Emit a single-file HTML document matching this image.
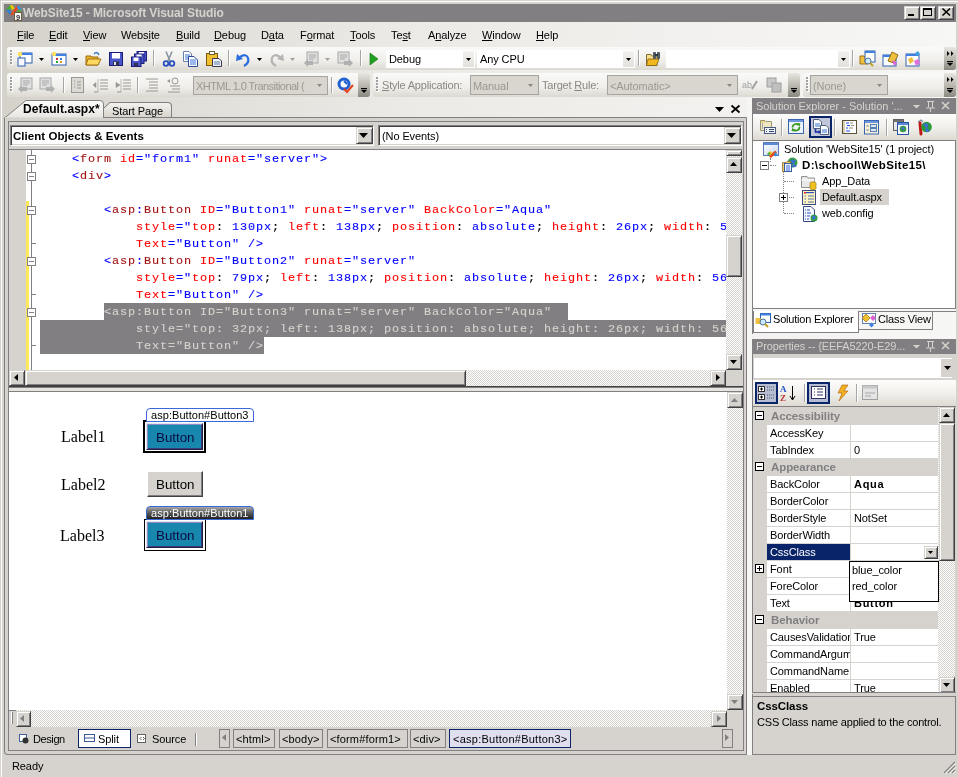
<!DOCTYPE html><html><head><meta charset="utf-8"><style>
*{box-sizing:border-box;margin:0;padding:0}
html,body{width:958px;height:777px;overflow:hidden}
body{position:relative;background:#d6d3ce;font-family:"Liberation Sans",sans-serif;font-size:11px;color:#000}
.a{position:absolute}
.t{position:absolute;white-space:pre}
.hatch{background-color:#eae8e3;background-image:repeating-conic-gradient(#d6d3ce 0 25%,#fff 0 50%);background-size:2px 2px}
.b3{position:absolute;background:#d6d3ce;border:1px solid;border-color:#d6d3ce #404040 #404040 #d6d3ce;box-shadow:inset 1px 1px #fff,inset -1px -1px #827f82}
.code{position:absolute;white-space:pre;font-family:"Liberation Mono",monospace;font-size:11.8px;letter-spacing:0.92px;line-height:17px;-webkit-text-stroke:0.12px}
.tg{color:#0000ff}.tn{color:#a31515}.an{color:#ff0000}.av{color:#0000ff}.pk{color:#000}
.tb{position:absolute;border-radius:3px;background:linear-gradient(#fafaf9,#efeeea 60%,#dcd9d1)}
svg{position:absolute;overflow:visible}
</style></head><body><div style="position:absolute;left:0;top:0;width:958px;height:777px;will-change:transform">
<div class="a " style="left:1px;top:1px;width:957px;height:1px;background:#fff"></div>
<div class="a " style="left:1px;top:1px;width:1px;height:776px;background:#fff"></div>
<div class="a " style="left:4px;top:22px;width:952px;height:733px;background:linear-gradient(90deg,#d5d2ca 0%,#e0ded8 18%,#eceae6 42%,#f3f2f0 79%,#f7f7f5 100%)"></div>
<div class="a " style="left:4px;top:4px;width:952px;height:18px;background:#827f82"></div>
<svg style="left:0;top:0" width="25" height="25" viewBox="0 0 25 25"><path d="M5.8 9.8 L10 5 L12.5 7.5 L10 9.8Z" fill="#4cae2c"/><path d="M10 5 L13 5.5 L14.5 8.5 L12 10 Z" fill="#f6c800"/><path d="M5.8 9.8 L10 9.8 L11 14.5 L10 14.8Z" fill="#2a7ee0"/><path d="M10.2 14.8 L17.6 5 L20 6.5 L12.5 15.5Z" fill="#e8461c"/><path d="M18 5 L22 9.5 L19.5 10 L17 7.5Z" fill="#2a9ae8"/><path d="M22 9.5 L19 13 L16 12.5 L18.5 10Z" fill="#4cae2c"/><path d="M13 12.5 L16 12 L14.5 14Z" fill="#f6c000"/><rect x="14.5" y="12.5" width="7" height="8" fill="#fff" stroke="#6a5a40"/><text x="18" y="19.6" font-size="7.5" font-weight="bold" text-anchor="middle" fill="#303030" font-family="Liberation Sans">9</text></svg>
<div class="t" style="left:23px;top:6px;font-size:12px;line-height:14px;font-weight:bold;color:#d6d3ce;letter-spacing:-0.1px">WebSite15 - Microsoft Visual Studio</div>
<div class="b3" style="left:904px;top:6px;width:16px;height:14px"></div>
<div class="b3" style="left:920px;top:6px;width:16px;height:14px"></div>
<div class="b3" style="left:938px;top:6px;width:16px;height:14px"></div>
<div class="a " style="left:908px;top:14px;width:6px;height:2px;background:#000"></div>
<div class="a " style="left:923px;top:8px;width:9px;height:8px;border:1px solid #000;border-top-width:2px"></div>
<svg style="left:942px;top:8px" width="9" height="8"><path d="M0.5 0.5 L8 7.5 M8 0.5 L0.5 7.5" stroke="#000" stroke-width="1.6"/></svg>
<div class="t" style="left:17px;top:29px;font-size:11px;line-height:13px;letter-spacing:-0.1px"><u>F</u>ile</div>
<div class="t" style="left:49px;top:29px;font-size:11px;line-height:13px;letter-spacing:-0.1px"><u>E</u>dit</div>
<div class="t" style="left:83px;top:29px;font-size:11px;line-height:13px;letter-spacing:-0.1px"><u>V</u>iew</div>
<div class="t" style="left:121px;top:29px;font-size:11px;line-height:13px;letter-spacing:-0.1px">Webs<u>i</u>te</div>
<div class="t" style="left:176px;top:29px;font-size:11px;line-height:13px;letter-spacing:-0.1px"><u>B</u>uild</div>
<div class="t" style="left:214px;top:29px;font-size:11px;line-height:13px;letter-spacing:-0.1px"><u>D</u>ebug</div>
<div class="t" style="left:261px;top:29px;font-size:11px;line-height:13px;letter-spacing:-0.1px">D<u>a</u>ta</div>
<div class="t" style="left:300px;top:29px;font-size:11px;line-height:13px;letter-spacing:-0.1px">F<u>o</u>rmat</div>
<div class="t" style="left:350px;top:29px;font-size:11px;line-height:13px;letter-spacing:-0.1px"><u>T</u>ools</div>
<div class="t" style="left:391px;top:29px;font-size:11px;line-height:13px;letter-spacing:-0.1px">Te<u>s</u>t</div>
<div class="t" style="left:428px;top:29px;font-size:11px;line-height:13px;letter-spacing:-0.1px">A<u>n</u>alyze</div>
<div class="t" style="left:482px;top:29px;font-size:11px;line-height:13px;letter-spacing:-0.1px"><u>W</u>indow</div>
<div class="t" style="left:536px;top:29px;font-size:11px;line-height:13px;letter-spacing:-0.1px"><u>H</u>elp</div>
<div class="tb" style="left:7px;top:47px;width:949px;height:23px"></div>
<div class="a " style="left:10px;top:50px;width:2px;height:2px;background:#a0a0a0;box-shadow:1px 1px #fff"></div>
<div class="a " style="left:10px;top:53px;width:2px;height:2px;background:#a0a0a0;box-shadow:1px 1px #fff"></div>
<div class="a " style="left:10px;top:56px;width:2px;height:2px;background:#a0a0a0;box-shadow:1px 1px #fff"></div>
<div class="a " style="left:10px;top:59px;width:2px;height:2px;background:#a0a0a0;box-shadow:1px 1px #fff"></div>
<div class="a " style="left:10px;top:62px;width:2px;height:2px;background:#a0a0a0;box-shadow:1px 1px #fff"></div>
<svg style="left:17px;top:51px" width="16" height="16" viewBox="0 0 16 16"><rect x="3" y="2" width="12" height="10" fill="#fff" stroke="#3060b0"/><rect x="3" y="2" width="12" height="2" fill="#4080e0"/><rect x="1" y="7" width="7" height="8" fill="#f8f8ff" stroke="#3060b0"/><circle cx="3" cy="3" r="2.2" fill="#ffe060"/></svg>
<svg style="left:39px;top:58px" width="5" height="3"><path d="M0 0H5L2.5 3Z" fill="#000"/></svg>
<svg style="left:51px;top:51px" width="16" height="16" viewBox="0 0 16 16"><rect x="1" y="3" width="14" height="11" fill="#fff" stroke="#3060b0"/><rect x="1" y="3" width="14" height="2" fill="#4080e0"/><rect x="5" y="7" width="2" height="2" fill="#d03030"/><rect x="9" y="7" width="2" height="2" fill="#3080e0"/><rect x="5" y="10" width="2" height="2" fill="#30a030"/><rect x="9" y="10" width="2" height="2" fill="#e0a020"/><circle cx="3" cy="3" r="2.2" fill="#ffe060"/></svg>
<svg style="left:73px;top:58px" width="5" height="3"><path d="M0 0H5L2.5 3Z" fill="#000"/></svg>
<svg style="left:85px;top:51px" width="16" height="16" viewBox="0 0 16 16"><path d="M1 5H6L7 6H13V14H1Z" fill="#e8b030" stroke="#a07010"/><path d="M3 8H16L13 14H1Z" fill="#ffd860" stroke="#a07010"/><path d="M9 3 Q12 0 14 4" stroke="#3070c0" fill="none" stroke-width="1.3"/></svg>
<svg style="left:108px;top:51px" width="16" height="16" viewBox="0 0 16 16"><rect x="1.5" y="1.5" width="13" height="13" fill="#4a56c8" stroke="#1c1c78"/><rect x="4" y="2" width="8" height="5.5" fill="#fff"/><rect x="5" y="10.5" width="6" height="4" fill="#303050"/><rect x="6" y="11" width="2" height="3" fill="#e0e0e0"/></svg>
<svg style="left:131px;top:51px" width="16" height="16" viewBox="0 0 16 16"><g><rect x="6" y="0.5" width="9.5" height="9.5" fill="#4a56c8" stroke="#1c1c78"/><rect x="8" y="1" width="5" height="3" fill="#fff"/></g><g><rect x="3.5" y="3" width="9.5" height="9.5" fill="#4a56c8" stroke="#1c1c78"/><rect x="5.5" y="3.5" width="5" height="3" fill="#fff"/></g><g><rect x="0.5" y="6" width="9.5" height="9.5" fill="#4a56c8" stroke="#1c1c78"/><rect x="2.5" y="6.5" width="5" height="3.5" fill="#fff"/><rect x="3" y="12" width="4" height="3" fill="#303050"/></g></svg>
<div class="a " style="left:153px;top:50px;width:1px;height:16px;background:#a6a6a6;box-shadow:1px 0 #fff"></div>
<svg style="left:161px;top:51px" width="16" height="16" viewBox="0 0 16 16"><path d="M5 0.5 L9 10 M11 0.5 L7 10" stroke="#8a96a0" stroke-width="1.6"/><circle cx="5" cy="12.5" r="2.3" fill="none" stroke="#2a50c0" stroke-width="1.8"/><circle cx="11" cy="12.5" r="2.3" fill="none" stroke="#2a50c0" stroke-width="1.8"/></svg>
<svg style="left:183px;top:51px" width="16" height="16" viewBox="0 0 16 16"><path d="M0.5 0.5H6L8.5 3V10.5H0.5Z" fill="#fff" stroke="#6a80b0"/><path d="M2 4H7M2 6H7M2 8H7" stroke="#3a70d8"/><path d="M5.5 5.5H11L14.5 9V15.5H5.5Z" fill="#fff" stroke="#2a4a9a"/><path d="M7 9H13M7 11H13M7 13H13" stroke="#3a70d8"/></svg>
<svg style="left:206px;top:51px" width="16" height="16" viewBox="0 0 16 16"><rect x="0.5" y="2.5" width="11" height="12" fill="#f0c030" stroke="#7a5a10"/><rect x="3.5" y="0.5" width="5" height="3" fill="#fff" stroke="#6a6040"/><path d="M6.5 7.5H13L15.5 10V15.5H6.5Z" fill="#eef0f8" stroke="#3a3a50"/><path d="M8 11H14M8 13H14" stroke="#6080b0"/></svg>
<div class="a " style="left:228px;top:50px;width:1px;height:16px;background:#a6a6a6;box-shadow:1px 0 #fff"></div>
<svg style="left:235px;top:51px" width="16" height="16" viewBox="0 0 16 16"><path d="M5 6 Q11 2 13 7 Q14.5 12 9 15" stroke="#2a6ee0" stroke-width="2.2" fill="none"/><path d="M1 10 L2 3 L8 8Z" fill="#2a6ee0"/></svg>
<svg style="left:257px;top:58px" width="5" height="3"><path d="M0 0H5L2.5 3Z" fill="#000"/></svg>
<svg style="left:269px;top:51px" width="16" height="16" viewBox="0 0 16 16"><path d="M11 6 Q5 2 3 7 Q1.5 12 7 15" stroke="#b4b4b4" stroke-width="2.2" fill="none"/><path d="M15 10 L14 3 L8 8Z" fill="#b4b4b4"/></svg>
<svg style="left:290px;top:58px" width="5" height="3"><path d="M0 0H5L2.5 3Z" fill="#a0a0a0"/></svg>
<svg style="left:303px;top:51px" width="16" height="16" viewBox="0 0 16 16"><rect x="4" y="1" width="11" height="11" fill="#e0e0e0" stroke="#a8a8a8"/><path d="M6 4H13M6 6H13M6 8H11" stroke="#a8a8a8"/><path d="M1 12 L5 8 V10 H10 V14 H5 V16Z" fill="#b0b0b0"/></svg>
<svg style="left:325px;top:58px" width="5" height="3"><path d="M0 0H5L2.5 3Z" fill="#a0a0a0"/></svg>
<svg style="left:337px;top:51px" width="16" height="16" viewBox="0 0 16 16"><rect x="1" y="1" width="11" height="11" fill="#e0e0e0" stroke="#a8a8a8"/><path d="M3 4H10M3 6H10M3 8H8" stroke="#a8a8a8"/><path d="M16 12 L12 8 V10 H7 V14 H12 V16Z" fill="#b0b0b0"/></svg>
<div class="a " style="left:360px;top:50px;width:1px;height:16px;background:#a6a6a6;box-shadow:1px 0 #fff"></div>
<svg style="left:366px;top:51px" width="16" height="16" viewBox="0 0 16 16"><path d="M4 2 L12 8 L4 14Z" fill="#20a020" stroke="#107010" stroke-width="0.6"/></svg>
<div class="a" style="left:386px;top:50px;width:89px;height:18px;background:#fff;border:1px solid #fff"></div>
<div class="a " style="left:463px;top:51px;width:11px;height:16px;background:linear-gradient(#f2f1f0,#e2e0da)"></div>
<svg style="left:466px;top:58px" width="5" height="3"><path d="M0 0H5L2.5 3Z" fill="#000"/></svg>
<div class="t" style="left:389px;top:53px;font-size:11px;line-height:13px;color:#000;letter-spacing:-0.1px">Debug</div>
<div class="a" style="left:477px;top:50px;width:158px;height:18px;background:#fff;border:1px solid #fff"></div>
<div class="a " style="left:623px;top:51px;width:11px;height:16px;background:linear-gradient(#f2f1f0,#e2e0da)"></div>
<svg style="left:626px;top:58px" width="5" height="3"><path d="M0 0H5L2.5 3Z" fill="#000"/></svg>
<div class="t" style="left:480px;top:53px;font-size:11px;line-height:13px;color:#000;letter-spacing:-0.1px">Any CPU</div>
<div class="a " style="left:638px;top:50px;width:1px;height:16px;background:#a6a6a6;box-shadow:1px 0 #fff"></div>
<svg style="left:645px;top:51px" width="16" height="16" viewBox="0 0 16 16"><path d="M1.5 3.5H6L7 5H12V14.5H1.5Z" fill="#f8e088" stroke="#807040"/><path d="M3 8H14L11.5 14.5H1.5Z" fill="#f2b820" stroke="#806010" stroke-width="0.8"/><rect x="8" y="1" width="3" height="7" rx="1" fill="#505860"/><rect x="12" y="1" width="3" height="7" rx="1" fill="#505860"/><rect x="10" y="3" width="3" height="2" fill="#303840"/></svg>
<div class="a" style="left:666px;top:50px;width:184px;height:18px;background:#fff;border:1px solid #fff"></div>
<div class="a " style="left:838px;top:51px;width:11px;height:16px;background:linear-gradient(#f2f1f0,#e2e0da)"></div>
<svg style="left:841px;top:58px" width="5" height="3"><path d="M0 0H5L2.5 3Z" fill="#000"/></svg>
<div class="t" style="left:669px;top:53px;font-size:11px;line-height:13px;color:#000;letter-spacing:-0.1px"></div>
<div class="a " style="left:852px;top:50px;width:1px;height:16px;background:#a6a6a6;box-shadow:1px 0 #fff"></div>
<svg style="left:859px;top:51px" width="16" height="16" viewBox="0 0 16 16"><path d="M1 5H5L6 6H9V13H1Z" fill="#f0c040" stroke="#a07010"/><rect x="6" y="0" width="10" height="11" fill="#fff" stroke="#3060b0"/><rect x="6" y="0" width="10" height="2" fill="#4080e0"/><circle cx="9" cy="10" r="3" fill="#c8e8ff" stroke="#507090"/><path d="M11 12 L14 15" stroke="#c0a020" stroke-width="2"/></svg>
<svg style="left:882px;top:51px" width="16" height="16" viewBox="0 0 16 16"><rect x="1" y="4" width="13" height="11" fill="#fff" stroke="#3060b0"/><rect x="1" y="4" width="13" height="2" fill="#4080e0"/><path d="M6 10 L10 1 L16 4 L12 12Z" fill="#f0c040" stroke="#907010"/><path d="M10 9 L15 12 L12 15" fill="#e060e0"/></svg>
<svg style="left:905px;top:51px" width="16" height="16" viewBox="0 0 16 16"><rect x="1" y="3" width="13" height="12" fill="#fff" stroke="#3060b0"/><rect x="1" y="3" width="13" height="2" fill="#4080e0"/><path d="M3 8 L7 6 L9 10 L5 13Z" fill="#f0c040"/><path d="M9 10 L13 8 L15 12 L11 15Z" fill="#e070e0"/><path d="M10 2 L13 0 L15 3 L12 5Z" fill="#40a0e0"/></svg>
<div class="a" style="left:944px;top:47px;width:12px;height:23px;border-radius:0 3px 3px 0;background:linear-gradient(#e8e6e0,#b8b5ad 55%,#8a877f)"></div>
<svg style="left:947px;top:51px" width="7" height="5"><path d="M0 0 L2.5 2.5 L0 5Z M4 0 L6.5 2.5 L4 5Z" fill="#000"/></svg>
<svg style="left:947px;top:61px" width="6" height="7"><path d="M0 2H6L3 5Z" fill="#000"/><rect x="0" y="0" width="6" height="1.2" fill="#000"/></svg>
<div class="tb" style="left:7px;top:73px;width:363px;height:24px"></div>
<div class="a " style="left:10px;top:77px;width:2px;height:2px;background:#a0a0a0;box-shadow:1px 1px #fff"></div>
<div class="a " style="left:10px;top:80px;width:2px;height:2px;background:#a0a0a0;box-shadow:1px 1px #fff"></div>
<div class="a " style="left:10px;top:83px;width:2px;height:2px;background:#a0a0a0;box-shadow:1px 1px #fff"></div>
<div class="a " style="left:10px;top:86px;width:2px;height:2px;background:#a0a0a0;box-shadow:1px 1px #fff"></div>
<div class="a " style="left:10px;top:89px;width:2px;height:2px;background:#a0a0a0;box-shadow:1px 1px #fff"></div>
<svg style="left:17px;top:77px" width="16" height="16" viewBox="0 0 16 16"><rect x="4" y="1" width="11" height="11" fill="#e0e0e0" stroke="#a8a8a8"/><path d="M6 4H13M6 6H13M6 8H11" stroke="#a8a8a8"/><path d="M1 12 L5 8 V10 H10 V14 H5 V16Z" fill="#b0b0b0"/></svg>
<svg style="left:39px;top:77px" width="16" height="16" viewBox="0 0 16 16"><rect x="1" y="1" width="11" height="11" fill="#e0e0e0" stroke="#a8a8a8"/><path d="M3 4H10M3 6H10M3 8H8" stroke="#a8a8a8"/><path d="M16 12 L12 8 V10 H7 V14 H12 V16Z" fill="#b0b0b0"/></svg>
<div class="a " style="left:63px;top:77px;width:1px;height:16px;background:#a6a6a6;box-shadow:1px 0 #fff"></div>
<svg style="left:71px;top:77px" width="13" height="16"><rect x="0.5" y="0.5" width="12" height="15" fill="#dcdad4" stroke="#9a9890"/><path d="M3 4H4M3 7H4M3 10H4M6 5H10M6 8H10M6 11H10" stroke="#9a9890"/></svg>
<svg style="left:92px;top:77px" width="17" height="16"><path d="M6 2V15M1 8 L4 5.5 V10.5Z" fill="#9a9890" stroke="#9a9890" stroke-width="0.6"/><path d="M8 3H16M8 6H16M8 9H16M8 12H16M2 15H6" stroke="#9a9890" stroke-width="1.2"/></svg>
<svg style="left:115px;top:77px" width="17" height="16"><path d="M6 2V15M5 8 L1 5.5 V10.5Z" fill="#9a9890" stroke="#9a9890" stroke-width="0.6"/><path d="M8 3H16M8 6H16M8 9H16M8 12H16M2 15H6" stroke="#9a9890" stroke-width="1.2"/></svg>
<svg style="left:145px;top:78px" width="14" height="14"><path d="M1 1H13M4 4H13M4 7H13M4 10H13M1 13H13" stroke="#9a9890" stroke-width="1.2"/></svg>
<svg style="left:166px;top:77px" width="15" height="16"><circle cx="9" cy="4" r="3" fill="none" stroke="#9a9890"/><path d="M1 4 L4 2V6Z" fill="#9a9890"/><path d="M4 9H14M6 12H14M2 15H14" stroke="#9a9890" stroke-width="1.2"/></svg>
<div class="a " style="left:137px;top:77px;width:1px;height:16px;background:#a6a6a6;box-shadow:1px 0 #fff"></div>
<div class="a" style="left:193px;top:76px;width:135px;height:19px;background:#d9d6cf;border:1px solid #a6a49e"></div>
<svg style="left:317px;top:84px" width="5" height="3"><path d="M0 0H5L2.5 3Z" fill="#8a8882"/></svg>
<div class="t" style="left:196px;top:80px;font-size:11px;line-height:13px;color:#9a988f;letter-spacing:-0.55px">XHTML 1.0 Transitional (</div>
<div class="a " style="left:331px;top:77px;width:1px;height:16px;background:#a6a6a6;box-shadow:1px 0 #fff"></div>
<svg style="left:337px;top:77px" width="16" height="16" viewBox="0 0 16 16"><circle cx="7" cy="7" r="6.5" fill="#2060d0"/><circle cx="7" cy="7" r="3.5" fill="#fff"/><path d="M7 4 L10 7" stroke="#2060d0" stroke-width="2"/><path d="M7 12 L10 15 L16 8" stroke="#e04020" stroke-width="2" fill="none"/></svg>
<div class="a" style="left:358px;top:73px;width:12px;height:24px;border-radius:0 3px 3px 0;background:linear-gradient(#e8e6e0,#b8b5ad 55%,#8a877f)"></div>
<svg style="left:361px;top:88px" width="6" height="7"><path d="M0 2H6L3 5Z" fill="#000"/><rect x="0" y="0" width="6" height="1.2" fill="#000"/></svg>
<div class="tb" style="left:373px;top:73px;width:427px;height:24px"></div>
<div class="a " style="left:376px;top:77px;width:2px;height:2px;background:#a0a0a0;box-shadow:1px 1px #fff"></div>
<div class="a " style="left:376px;top:80px;width:2px;height:2px;background:#a0a0a0;box-shadow:1px 1px #fff"></div>
<div class="a " style="left:376px;top:83px;width:2px;height:2px;background:#a0a0a0;box-shadow:1px 1px #fff"></div>
<div class="a " style="left:376px;top:86px;width:2px;height:2px;background:#a0a0a0;box-shadow:1px 1px #fff"></div>
<div class="a " style="left:376px;top:89px;width:2px;height:2px;background:#a0a0a0;box-shadow:1px 1px #fff"></div>
<div class="t" style="left:382px;top:79px;font-size:11px;line-height:13px;color:#8a8882;letter-spacing:-0.2px"><u>S</u>tyle Application:</div>
<div class="a" style="left:470px;top:75px;width:69px;height:20px;background:#d9d6cf;border:1px solid #a6a49e"></div>
<svg style="left:528px;top:84px" width="5" height="3"><path d="M0 0H5L2.5 3Z" fill="#8a8882"/></svg>
<div class="t" style="left:473px;top:80px;font-size:11px;line-height:13px;color:#9a988f;letter-spacing:-0.1px">Manual</div>
<div class="t" style="left:542px;top:79px;font-size:11px;line-height:13px;color:#8a8882;letter-spacing:-0.2px">Target <u>R</u>ule:</div>
<div class="a" style="left:607px;top:75px;width:131px;height:20px;background:#d9d6cf;border:1px solid #a6a49e"></div>
<svg style="left:727px;top:84px" width="5" height="3"><path d="M0 0H5L2.5 3Z" fill="#8a8882"/></svg>
<div class="t" style="left:610px;top:80px;font-size:11px;line-height:13px;color:#9a988f;letter-spacing:-0.1px">&lt;Automatic&gt;</div>
<svg style="left:742px;top:77px" width="16" height="16" viewBox="0 0 16 16"><text x="0" y="11" font-size="9" fill="#a0a0a0" font-family="Liberation Sans">ab</text><path d="M10 12 L15 4" stroke="#a0a0a0" stroke-width="2"/></svg>
<svg style="left:766px;top:77px" width="16" height="16" viewBox="0 0 16 16"><rect x="1" y="1" width="9" height="9" fill="#c8c8c8" stroke="#a0a0a0"/><rect x="6" y="6" width="9" height="9" fill="#c0c0c0" stroke="#a0a0a0"/></svg>
<div class="a" style="left:788px;top:73px;width:12px;height:24px;border-radius:0 3px 3px 0;background:linear-gradient(#e8e6e0,#b8b5ad 55%,#8a877f)"></div>
<svg style="left:791px;top:88px" width="6" height="7"><path d="M0 2H6L3 5Z" fill="#000"/><rect x="0" y="0" width="6" height="1.2" fill="#000"/></svg>
<div class="tb" style="left:803px;top:73px;width:153px;height:24px"></div>
<div class="a " style="left:806px;top:77px;width:2px;height:2px;background:#a0a0a0;box-shadow:1px 1px #fff"></div>
<div class="a " style="left:806px;top:80px;width:2px;height:2px;background:#a0a0a0;box-shadow:1px 1px #fff"></div>
<div class="a " style="left:806px;top:83px;width:2px;height:2px;background:#a0a0a0;box-shadow:1px 1px #fff"></div>
<div class="a " style="left:806px;top:86px;width:2px;height:2px;background:#a0a0a0;box-shadow:1px 1px #fff"></div>
<div class="a " style="left:806px;top:89px;width:2px;height:2px;background:#a0a0a0;box-shadow:1px 1px #fff"></div>
<div class="a" style="left:810px;top:75px;width:78px;height:20px;background:#d9d6cf;border:1px solid #a6a49e"></div>
<svg style="left:877px;top:84px" width="5" height="3"><path d="M0 0H5L2.5 3Z" fill="#8a8882"/></svg>
<div class="t" style="left:813px;top:80px;font-size:11px;line-height:13px;color:#9a988f;letter-spacing:-0.1px">(None)</div>
<div class="a" style="left:944px;top:73px;width:12px;height:24px;border-radius:0 3px 3px 0;background:linear-gradient(#e8e6e0,#b8b5ad 55%,#8a877f)"></div>
<svg style="left:947px;top:77px" width="7" height="5"><path d="M0 0 L2.5 2.5 L0 5Z M4 0 L6.5 2.5 L4 5Z" fill="#000"/></svg>
<svg style="left:947px;top:88px" width="6" height="7"><path d="M0 2H6L3 5Z" fill="#000"/><rect x="0" y="0" width="6" height="1.2" fill="#000"/></svg>
<svg style="left:0;top:96px" width="760" height="30"><defs><linearGradient id="tg1" x1="0" y1="0" x2="0" y2="1"><stop offset="0" stop-color="#fdfdfc"/><stop offset="1" stop-color="#dedbd4"/></linearGradient><linearGradient id="tg2" x1="0" y1="0" x2="0" y2="1"><stop offset="0" stop-color="#f4f3ef"/><stop offset="1" stop-color="#d6d3cb"/></linearGradient></defs><path d="M4.5 30 V21.5 L103.5 21.5 L103.5 12.5 L110 6.5 L168 6.5 Q171.5 6.5 171.5 10 V21.5 L746.5 21.5 V30" fill="#d6d3ce" stroke="#827f82"/><path d="M103.5 21.5 V12.5 L110 6.5 L168 6.5 Q171.5 6.5 171.5 10 V21.5Z" fill="url(#tg2)" stroke="#827f82"/><path d="M4.5 30 V22 L26 4.5 L100 4.5 Q103.5 4.5 103.5 8 V22 V30Z" fill="url(#tg1)" stroke="#827f82"/><rect x="5" y="21" width="98" height="6" fill="#dedbd4"/></svg>
<div class="t" style="left:23px;top:102px;font-size:12px;line-height:14px;font-weight:bold;letter-spacing:0.05px">Default.aspx*</div>
<div class="t" style="left:112px;top:105px;font-size:11px;line-height:13px;letter-spacing:-0.1px">Start Page</div>
<svg style="left:715px;top:107px" width="9" height="5"><path d="M0 0H9L4.5 5Z" fill="#000"/></svg>
<svg style="left:731px;top:105px" width="9" height="8"><path d="M0.5 0.5 L8.5 7.5 M8.5 0.5 L0.5 7.5" stroke="#000" stroke-width="1.7"/></svg>
<div class="a " style="left:4px;top:118px;width:743px;height:637px;border:1px solid #827f82;border-top:none;border-radius:0 0 0 4px;background:#d6d3ce"></div>
<div class="a " style="left:8px;top:121px;width:736px;height:630px;border:1px solid #827f82;background:#d6d3ce"></div>
<div class="a" style="left:10px;top:125px;width:364px;height:21px;background:#fff;border:1px solid;border-color:#827f82 #fff #fff #827f82;box-shadow:inset 1px 1px #404040,inset -1px -1px #d6d3ce"></div>
<div class="b3" style="left:356px;top:127px;width:17px;height:17px"></div>
<svg style="left:359px;top:133px" width="9" height="5"><path d="M0 0H9L4.5 5Z" fill="#000"/></svg>
<div class="t" style="left:13px;top:130px;font-size:11.5px;line-height:13px;font-weight:bold;letter-spacing:0.05px">Client Objects &amp; Events</div>
<div class="a" style="left:378px;top:125px;width:364px;height:21px;background:#fff;border:1px solid;border-color:#827f82 #fff #fff #827f82;box-shadow:inset 1px 1px #404040,inset -1px -1px #d6d3ce"></div>
<div class="b3" style="left:724px;top:127px;width:17px;height:17px"></div>
<svg style="left:727px;top:133px" width="9" height="5"><path d="M0 0H9L4.5 5Z" fill="#000"/></svg>
<div class="t" style="left:382px;top:130px;font-size:11px;line-height:13px;letter-spacing:-0.1px">(No Events)</div>
<div class="a " style="left:9px;top:149px;width:733px;height:1px;background:#827f82"></div>
<div class="a " style="left:9px;top:150px;width:717px;height:220px;background:#fff"></div>
<div class="a " style="left:9px;top:150px;width:17px;height:220px;background:#d6d3ce"></div>
<div class="a " style="left:26px;top:201px;width:3px;height:169px;background:#ffe75a"></div>
<div class="a " style="left:31px;top:150px;width:1px;height:220px;background:#827f82"></div>
<div class="a " style="left:27px;top:155px;width:9px;height:9px;background:#fff;border:1px solid #827f82"></div>
<div class="a " style="left:29px;top:159px;width:5px;height:1px;background:#827f82"></div>
<div class="a " style="left:27px;top:172px;width:9px;height:9px;background:#fff;border:1px solid #827f82"></div>
<div class="a " style="left:29px;top:176px;width:5px;height:1px;background:#827f82"></div>
<div class="a " style="left:27px;top:206px;width:9px;height:9px;background:#fff;border:1px solid #827f82"></div>
<div class="a " style="left:29px;top:210px;width:5px;height:1px;background:#827f82"></div>
<div class="a " style="left:27px;top:257px;width:9px;height:9px;background:#fff;border:1px solid #827f82"></div>
<div class="a " style="left:29px;top:261px;width:5px;height:1px;background:#827f82"></div>
<div class="a " style="left:27px;top:308px;width:9px;height:9px;background:#fff;border:1px solid #827f82"></div>
<div class="a " style="left:29px;top:312px;width:5px;height:1px;background:#827f82"></div>
<div class="a " style="left:31px;top:243px;width:5px;height:1px;background:#827f82"></div>
<div class="a " style="left:31px;top:294px;width:5px;height:1px;background:#827f82"></div>
<div class="a " style="left:31px;top:345px;width:5px;height:1px;background:#827f82"></div>
<div class="a " style="left:104px;top:303px;width:464px;height:17px;background:#827f82"></div>
<div class="a " style="left:40px;top:320px;width:686px;height:17px;background:#827f82"></div>
<div class="a " style="left:40px;top:337px;width:224px;height:17px;background:#827f82"></div>
<div class="a" style="left:40px;top:150px;width:686px;height:220px;overflow:hidden">
<div class="code" style="left:0;top:1px">    <span class="tg">&lt;</span><span class="tn">form</span> <span class="an">id</span><span class="tg">=</span><span class="av">&quot;form1&quot;</span> <span class="an">runat</span><span class="tg">=</span><span class="av">&quot;server&quot;</span><span class="tg">&gt;</span></div>
<div class="code" style="left:0;top:18px">    <span class="tg">&lt;</span><span class="tn">div</span><span class="tg">&gt;</span></div>
<div class="code" style="left:0;top:35px"></div>
<div class="code" style="left:0;top:52px">        <span class="tg">&lt;</span><span class="tn">asp</span><span class="tg">:</span><span class="tn">Button</span> <span class="an">ID</span><span class="tg">=</span><span class="av">&quot;Button1&quot;</span> <span class="an">runat</span><span class="tg">=</span><span class="av">&quot;server&quot;</span> <span class="an">BackColor</span><span class="tg">=</span><span class="av">&quot;Aqua&quot;</span></div>
<div class="code" style="left:0;top:69px">            <span class="an">style</span><span class="tg">=&quot;</span><span class="an">top</span><span class="pk">:</span> <span class="av">130px</span><span class="pk">;</span> <span class="an">left</span><span class="pk">:</span> <span class="av">138px</span><span class="pk">;</span> <span class="an">position</span><span class="pk">:</span> <span class="av">absolute</span><span class="pk">;</span> <span class="an">height</span><span class="pk">:</span> <span class="av">26px</span><span class="pk">;</span> <span class="an">width</span><span class="pk">:</span> <span class="av">56px&quot;</span></div>
<div class="code" style="left:0;top:86px">            <span class="an">Text</span><span class="tg">=</span><span class="av">&quot;Button&quot;</span> <span class="tg">/&gt;</span></div>
<div class="code" style="left:0;top:103px">        <span class="tg">&lt;</span><span class="tn">asp</span><span class="tg">:</span><span class="tn">Button</span> <span class="an">ID</span><span class="tg">=</span><span class="av">&quot;Button2&quot;</span> <span class="an">runat</span><span class="tg">=</span><span class="av">&quot;server&quot;</span></div>
<div class="code" style="left:0;top:120px">            <span class="an">style</span><span class="tg">=&quot;</span><span class="an">top</span><span class="pk">:</span> <span class="av">79px</span><span class="pk">;</span> <span class="an">left</span><span class="pk">:</span> <span class="av">138px</span><span class="pk">;</span> <span class="an">position</span><span class="pk">:</span> <span class="av">absolute</span><span class="pk">;</span> <span class="an">height</span><span class="pk">:</span> <span class="av">26px</span><span class="pk">;</span> <span class="an">width</span><span class="pk">:</span> <span class="av">56px&quot;</span></div>
<div class="code" style="left:0;top:137px">            <span class="an">Text</span><span class="tg">=</span><span class="av">&quot;Button&quot;</span> <span class="tg">/&gt;</span></div>
<div class="code" style="left:0;top:154px;color:#d6d3ce">        &lt;asp:Button ID=&quot;Button3&quot; runat=&quot;server&quot; BackColor=&quot;Aqua&quot;</div>
<div class="code" style="left:0;top:171px;color:#d6d3ce">            style=&quot;top: 32px; left: 138px; position: absolute; height: 26px; width: 56px&quot;</div>
<div class="code" style="left:0;top:188px;color:#d6d3ce">            Text=&quot;Button&quot; /&gt;</div>
</div>
<div class="a hatch" style="left:726px;top:150px;width:16px;height:220px;"></div>
<div class="b3" style="left:726px;top:150px;width:16px;height:6px"></div>
<div class="b3" style="left:726px;top:157px;width:16px;height:16px"></div>
<svg style="left:730px;top:162px" width="7" height="4"><path d="M0 4H7L3.5 0Z" fill="#000"/></svg>
<div class="b3" style="left:726px;top:235px;width:16px;height:42px"></div>
<div class="b3" style="left:726px;top:354px;width:16px;height:16px"></div>
<svg style="left:730px;top:360px" width="7" height="4"><path d="M0 0H7L3.5 4Z" fill="#000"/></svg>
<div class="a hatch" style="left:9px;top:370px;width:733px;height:16px;"></div>
<div class="b3" style="left:9px;top:370px;width:16px;height:16px"></div>
<svg style="left:14px;top:374px" width="4" height="7"><path d="M4 0V7L0 3.5Z" fill="#000"/></svg>
<div class="b3" style="left:25px;top:370px;width:441px;height:16px"></div>
<div class="b3" style="left:710px;top:370px;width:16px;height:16px"></div>
<svg style="left:716px;top:374px" width="4" height="7"><path d="M0 0V7L4 3.5Z" fill="#000"/></svg>
<div class="a " style="left:726px;top:370px;width:16px;height:16px;background:#d6d3ce"></div>
<div class="a " style="left:9px;top:386px;width:734px;height:1px;background:#404040"></div>
<div class="a " style="left:9px;top:387px;width:734px;height:1px;background:#827f82"></div>
<div class="a " style="left:9px;top:388px;width:734px;height:3px;background:#e6e4de"></div>
<div class="a " style="left:9px;top:391px;width:734px;height:1px;background:#827f82"></div>
<div class="a " style="left:9px;top:392px;width:718px;height:318px;background:#fff"></div>
<div class="a hatch" style="left:727px;top:392px;width:16px;height:334px;"></div>
<div class="b3" style="left:727px;top:392px;width:16px;height:16px"></div>
<svg style="left:731px;top:398px" width="7" height="4"><path d="M0 4H7L3.5 0Z" fill="#827f82"/></svg>
<div class="b3" style="left:727px;top:694px;width:16px;height:16px"></div>
<svg style="left:731px;top:700px" width="7" height="4"><path d="M0 0H7L3.5 4Z" fill="#827f82"/></svg>
<div class="a hatch" style="left:9px;top:710px;width:718px;height:17px;"></div>
<div class="a " style="left:9px;top:710px;width:7px;height:17px;background:#d6d3ce;border-top:1px solid #827f82"></div>
<div class="a " style="left:11px;top:712px;width:1px;height:12px;background:#fff;box-shadow:1px 0 #827f82"></div>
<div class="b3" style="left:16px;top:711px;width:15px;height:16px"></div>
<svg style="left:20px;top:715px" width="4" height="7"><path d="M4 0V7L0 3.5Z" fill="#827f82"/></svg>
<div class="b3" style="left:711px;top:711px;width:16px;height:16px"></div>
<svg style="left:717px;top:715px" width="4" height="7"><path d="M0 0V7L4 3.5Z" fill="#827f82"/></svg>
<div class="a " style="left:727px;top:710px;width:16px;height:17px;background:#d6d3ce"></div>
<div class="t" style="left:61px;top:428px;font-family:'Liberation Serif',serif;font-size:16px;line-height:18px">Label1</div>
<div class="t" style="left:61px;top:476px;font-family:'Liberation Serif',serif;font-size:16px;line-height:18px">Label2</div>
<div class="t" style="left:60px;top:527px;font-family:'Liberation Serif',serif;font-size:16px;line-height:18px">Label3</div>
<div class="a" style="left:146px;top:408px;width:108px;height:14px;background:#fff;border:1px solid #3b68d8;border-radius:4px 4px 0 0;z-index:2"></div>
<div class="t" style="left:151px;top:409px;font-size:11px;line-height:13px;letter-spacing:0.05px;z-index:3">asp:Button#Button3</div>
<div class="a" style="left:146px;top:506px;width:108px;height:14px;background:linear-gradient(#a8a8a8,#585858 50%,#202020);border:1px solid #3b68d8;border-radius:4px 4px 0 0;z-index:2"></div>
<div class="t" style="left:151px;top:507px;font-size:11px;line-height:13px;color:#fff;letter-spacing:0.05px;z-index:3">asp:Button#Button1</div>
<div class="a " style="left:143px;top:420px;width:63px;height:33px;border:2px solid #000;border-right-width:2px;border-bottom-width:2px"></div>
<div class="a" style="left:146px;top:423px;width:57px;height:27px;background:#1887ae;border:1px solid;border-color:#e4e4ec #202040 #202040 #e4e4ec;box-shadow:inset 1px 1px #8a8ac4,inset -1px -1px #3a3a80"></div>
<div class="t" style="left:156px;top:431px;font-size:13.33px;line-height:13px;color:#0a0a40">Button</div>
<div class="a" style="left:147px;top:471px;width:56px;height:26px;background:#d6d3ce;border:1px solid;border-color:#fff #404040 #404040 #fff;box-shadow:inset -1px -1px #827f82"></div>
<div class="t" style="left:156px;top:478px;font-size:13.33px;line-height:13px;">Button</div>
<div class="a " style="left:144px;top:519px;width:62px;height:32px;border:1px solid #000"></div>
<div class="a" style="left:146px;top:521px;width:57px;height:27px;background:#1887ae;border:1px solid;border-color:#e4e4ec #202040 #202040 #e4e4ec;box-shadow:inset 1px 1px #8a8ac4,inset -1px -1px #3a3a80"></div>
<div class="t" style="left:156px;top:529px;font-size:13.33px;line-height:13px;color:#0a0a40">Button</div>
<div class="a " style="left:9px;top:727px;width:734px;height:23px;background:#d6d3ce"></div>
<svg style="left:19px;top:734px" width="10" height="10"><rect x="0.5" y="0.5" width="7" height="7" fill="#fff" stroke="#4060a0"/><circle cx="6.5" cy="6.5" r="3" fill="#303030"/></svg>
<div class="t" style="left:33px;top:733px;font-size:11px;line-height:13px;letter-spacing:-0.4px">Design</div>
<div class="a " style="left:78px;top:729px;width:53px;height:19px;background:#fff;border:1px solid #0a246a"></div>
<svg style="left:84px;top:734px" width="12" height="9"><rect x="0.5" y="0.5" width="10" height="7" fill="#fff" stroke="#3a5a9a"/><path d="M1 4H10" stroke="#3a5a9a"/></svg>
<div class="t" style="left:98px;top:733px;font-size:11px;line-height:13px;letter-spacing:-0.1px">Split</div>
<svg style="left:137px;top:734px" width="10" height="10"><rect x="0.5" y="0.5" width="8" height="8" fill="#fff" stroke="#606060"/><path d="M3 4.5 L4.5 3 M3 4.5 L4.5 6 M6 3 L7.5 4.5 L6 6" stroke="#303030" stroke-width="0.8" fill="none"/></svg>
<div class="t" style="left:152px;top:733px;font-size:11px;line-height:13px;letter-spacing:-0.1px">Source</div>
<div class="a " style="left:195px;top:733px;width:1px;height:13px;background:#827f82;box-shadow:1px 0 #fff"></div>
<div class="a " style="left:219px;top:729px;width:11px;height:19px;border:1px solid #827f82"></div>
<svg style="left:222px;top:734px" width="4" height="7"><path d="M4 0V7L0 3.5Z" fill="#827f82"/></svg>
<div class="a " style="left:233px;top:729px;width:42px;height:19px;border:1px solid #827f82"></div>
<div class="t" style="left:236px;top:733px;font-size:11px;line-height:13px;letter-spacing:0.15px">&lt;html&gt;</div>
<div class="a " style="left:279px;top:729px;width:44px;height:19px;border:1px solid #827f82"></div>
<div class="t" style="left:282px;top:733px;font-size:11px;line-height:13px;letter-spacing:0.15px">&lt;body&gt;</div>
<div class="a " style="left:327px;top:729px;width:81px;height:19px;border:1px solid #827f82"></div>
<div class="t" style="left:330px;top:733px;font-size:11px;line-height:13px;letter-spacing:0.15px">&lt;form#form1&gt;</div>
<div class="a " style="left:410px;top:729px;width:36px;height:19px;border:1px solid #827f82"></div>
<div class="t" style="left:413px;top:733px;font-size:11px;line-height:13px;letter-spacing:0.15px">&lt;div&gt;</div>
<div class="a " style="left:449px;top:729px;width:122px;height:19px;background:#e0dff0;border:1px solid #0a246a"></div>
<div class="t" style="left:453px;top:733px;font-size:11px;line-height:13px;letter-spacing:0.25px">&lt;asp:Button#Button3&gt;</div>
<div class="a " style="left:722px;top:729px;width:11px;height:19px;border:1px solid #827f82"></div>
<svg style="left:725px;top:734px" width="4" height="7"><path d="M0 0V7L4 3.5Z" fill="#827f82"/></svg>
<div class="a " style="left:747px;top:98px;width:5px;height:657px;background:#f6f6f4"></div>
<div class="a " style="left:752px;top:98px;width:204px;height:16px;background:#827f82"></div>
<div class="t" style="left:756px;top:100px;font-size:11px;line-height:13px;color:#d6d3ce;letter-spacing:-0.03px">Solution Explorer - Solution &#x27;...</div>
<svg style="left:913px;top:101px" width="40" height="12"><path d="M0 4H7L3.5 7.5Z" fill="#d6d3ce"/><path d="M15.5 0.5V6.5 M19.5 0.5V6.5 M14 0.5H21 M13 7H22 M17.5 7V11" stroke="#d6d3ce" fill="none"/><path d="M29 1 L36 8 M36 1 L29 8" stroke="#d6d3ce" stroke-width="1.5"/></svg>
<div class="a " style="left:752px;top:114px;width:204px;height:26px;background:linear-gradient(#fdfdfc,#f1f0ec 50%,#dddad2)"></div>
<div class="a " style="left:752px;top:114px;width:1px;height:220px;background:#827f82"></div>
<svg style="left:760px;top:119px" width="16" height="16" viewBox="0 0 16 16"><path d="M0.5 1.5H5L6 2.5H11.5V11.5H0.5Z" fill="#efe6c0" stroke="#9a9478"/><rect x="1" y="2" width="4" height="1.5" fill="#f0d070"/><path d="M2 5H3M2 7H3M2 9H3" stroke="#5070a0"/><rect x="4.5" y="8.5" width="11" height="6" fill="#eef2fa" stroke="#4a5a7a"/><path d="M6 10.5H7M6 12.5H7M9 10.5H14M9 12.5H14" stroke="#3a4a6a"/></svg>
<div class="a " style="left:781px;top:119px;width:1px;height:17px;background:#a6a6a6;box-shadow:1px 0 #fff"></div>
<svg style="left:788px;top:119px" width="16" height="16" viewBox="0 0 16 16"><rect x="0.5" y="0.5" width="15" height="14" fill="#eef4ff" stroke="#3a64b0"/><rect x="1" y="1" width="14" height="2" fill="#6a96e0"/><path d="M4.5 8.5 A3.5 3.5 0 0 1 10.5 6" stroke="#3a9a20" stroke-width="1.8" fill="none"/><path d="M11.5 8 A3.5 3.5 0 0 1 5.5 10.5" stroke="#3a9a20" stroke-width="1.8" fill="none"/><path d="M9 4 L12.5 4.5 L11.5 8Z M7 12.5 L3.5 12 L4.5 8.5Z" fill="#3a9a20"/></svg>
<div class="a " style="left:809px;top:116px;width:23px;height:22px;background:#c1c6d8;border:2px solid #0a246a"></div>
<svg style="left:813px;top:119px" width="16" height="16" viewBox="0 0 16 16"><path d="M0.5 0.5H6L8.5 3V9.5H0.5Z" fill="#fff" stroke="#506080"/><path d="M2 5H7M2 7H7" stroke="#3070d0"/><path d="M7.5 6.5H13L15.5 9V15.5H7.5Z" fill="#fff" stroke="#506080"/><path d="M9 11H14M9 13H14" stroke="#3070d0"/><path d="M2.5 10V13H6" stroke="#1a2aa0" stroke-width="1.6" fill="none"/><path d="M5.5 11 L8 13 L5.5 15Z" fill="#1a2aa0"/></svg>
<div class="a " style="left:834px;top:119px;width:1px;height:17px;background:#a6a6a6;box-shadow:1px 0 #fff"></div>
<svg style="left:842px;top:120px" width="16" height="16" viewBox="0 0 16 16"><rect x="0.5" y="0.5" width="14" height="13" fill="#fff" stroke="#5a5238"/><rect x="1" y="1" width="2" height="12" fill="#d8d0b0"/><path d="M4 3H7M5 5.5H8M4 8H6M4 11H8" stroke="#1a50f0" stroke-width="1.2"/><path d="M8 3H11M9 5.5H12M7 8H11" stroke="#909090"/></svg>
<svg style="left:864px;top:120px" width="16" height="16" viewBox="0 0 16 16"><rect x="0.5" y="0.5" width="14" height="13.5" fill="#f6f0d8" stroke="#3a64b0"/><rect x="1" y="1" width="13" height="2" fill="#6a96e0"/><path d="M2.5 6H4.5M2.5 10H4.5" stroke="#5a7090"/><rect x="6.5" y="4.5" width="6" height="3" fill="#dce8f8" stroke="#5a80b0"/><rect x="6.5" y="8.5" width="6" height="3" fill="#dce8f8" stroke="#5a80b0"/></svg>
<div class="a " style="left:886px;top:119px;width:1px;height:17px;background:#a6a6a6;box-shadow:1px 0 #fff"></div>
<svg style="left:893px;top:119px" width="16" height="16" viewBox="0 0 16 16"><rect x="0.5" y="0.5" width="10" height="11" fill="#e8e8e8" stroke="#606060"/><rect x="1" y="1" width="9" height="2" fill="#707070"/><rect x="4.5" y="3.5" width="11" height="12" fill="#f4f8ff" stroke="#2a54a0"/><rect x="5" y="4" width="10" height="2" fill="#5a8ad8"/><circle cx="10" cy="10" r="3.3" fill="#3a9a40"/><path d="M8 9 Q10 7.5 12 9.5 Q10 12 9 10.5Z" fill="#3c70d0"/></svg>
<svg style="left:916px;top:119px" width="16" height="16" viewBox="0 0 16 16"><path d="M2 3 L5 1 L7 3" stroke="#8090a0" stroke-width="1.2" fill="none"/><path d="M4 4 L5 15" stroke="#c01818" stroke-width="3" stroke-linecap="round"/><circle cx="10.5" cy="8" r="5.3" fill="#2a9a38"/><path d="M7 5 Q10 3 13 6 L11 9 L14 12 Q11 14 9 12 L10 9Z" fill="#3c70d0"/></svg>
<div class="a " style="left:752px;top:140px;width:204px;height:169px;background:#fff;border:1px solid #827f82"></div>
<svg style="left:763px;top:142px" width="16" height="16" viewBox="0 0 16 16"><defs><linearGradient id="sg" x1="0" y1="0" x2="1" y2="1"><stop offset="0" stop-color="#fff"/><stop offset="1" stop-color="#c8d8f0"/></linearGradient></defs><rect x="0.5" y="0.5" width="15" height="13" fill="url(#sg)" stroke="#5a7ab8"/><rect x="1" y="1" width="14" height="2" fill="#5a8ad8"/><path d="M5 11.5 L7.5 9 L10 11.5 L7.5 14Z" fill="#f0c020"/><path d="M6 14.5 L12 8.5 L14 10.5 L8 16Z" fill="#e84818"/><path d="M4 12 L6 10 L7.5 11.5 L5.5 13.5Z" fill="#50b030"/><path d="M12 10 L14.5 12.5 L12.5 14.5 L11 13Z" fill="#3090e0"/></svg>
<div class="t" style="left:784px;top:143px;font-size:11px;line-height:13px;letter-spacing:-0.1px">Solution &#x27;WebSite15&#x27; (1 project)</div>
<div class="a " style="left:770px;top:158px;width:1px;height:4px;border-left:1px dotted #827f82"></div>
<div class="a " style="left:760px;top:161px;width:9px;height:9px;background:#fff;border:1px solid #827f82"></div>
<div class="a " style="left:762px;top:165px;width:5px;height:1px;background:#000"></div>
<div class="a " style="left:770px;top:165px;width:6px;height:1px;border-top:1px dotted #827f82"></div>
<svg style="left:782px;top:157px" width="16" height="16" viewBox="0 0 16 16"><circle cx="10.5" cy="5.5" r="5" fill="#3aa040"/><path d="M8 3 Q11 1 14 4 L12 7 L15 9 Q13 11 10 10 L11 7Z" fill="#3c70d0"/><path d="M0.5 5.5H4L5 4.5H8.5V14.5H0.5Z" fill="#f0d070" stroke="#806020" stroke-width="0.7"/><rect x="2.5" y="6.5" width="7" height="8" fill="#eef2fc" stroke="#3a5a9a"/><path d="M4 9H8M4 11H8M4 13H8" stroke="#3a70d8"/></svg>
<div class="t" style="left:802px;top:159px;font-size:11.5px;line-height:13px;font-weight:bold;letter-spacing:0.35px">D:\school\WebSite15\</div>
<div class="a " style="left:783px;top:172px;width:1px;height:41px;border-left:1px dotted #827f82"></div>
<div class="a " style="left:784px;top:181px;width:10px;height:1px;border-top:1px dotted #827f82"></div>
<div class="a " style="left:784px;top:197px;width:10px;height:1px;border-top:1px dotted #827f82"></div>
<div class="a " style="left:784px;top:213px;width:10px;height:1px;border-top:1px dotted #827f82"></div>
<div class="a " style="left:779px;top:193px;width:9px;height:9px;background:#fff;border:1px solid #827f82"></div>
<div class="a " style="left:781px;top:197px;width:5px;height:1px;background:#000"></div>
<div class="a " style="left:783px;top:195px;width:1px;height:5px;background:#000"></div>
<svg style="left:801px;top:174px" width="16" height="16" viewBox="0 0 16 16"><path d="M0.5 2.5H6L7 4H13.5V13.5H0.5Z" fill="#e8e8e8" stroke="#909090"/><path d="M0.5 6H13.5" stroke="#fff"/><rect x="9" y="8" width="6" height="7.5" rx="1.5" fill="#f0c020" stroke="#a08010" stroke-width="0.7"/></svg>
<div class="t" style="left:822px;top:175px;font-size:11px;line-height:13px;letter-spacing:-0.1px">App_Data</div>
<svg style="left:802px;top:190px" width="16" height="16" viewBox="0 0 16 16"><rect x="0.5" y="0.5" width="13" height="14" fill="#fff4c0" stroke="#3a4a80"/><rect x="2" y="2" width="10" height="1.2" fill="#3050c0"/><rect x="2" y="2" width="2" height="1.5" fill="#e03030"/><path d="M2.5 6H4M6 6H12M2.5 9H4M6 9H12M2.5 12H4M6 12H12" stroke="#5070b0"/></svg>
<div class="a " style="left:820px;top:189px;width:69px;height:16px;background:#d6d3ce"></div>
<div class="t" style="left:822px;top:191px;font-size:11px;line-height:13px;letter-spacing:-0.1px">Default.aspx</div>
<svg style="left:802px;top:206px" width="16" height="16" viewBox="0 0 16 16"><path d="M1.5 0.5H9L12.5 4V15.5H1.5Z" fill="#f6f8ff" stroke="#3a4a80"/><path d="M3 4H4M5 4H8M3 7H4M5 7H9M3 10H4M5 10H8M3 13H4M5 13H7" stroke="#3050c0"/><circle cx="12" cy="12" r="3.5" fill="#30a040"/><path d="M10 10.5 Q12 9 14 11 L13 13 Q11.5 14 10.5 13Z" fill="#4070d0"/></svg>
<div class="t" style="left:822px;top:207px;font-size:11px;line-height:13px;letter-spacing:-0.1px">web.config</div>
<div class="a " style="left:753px;top:309px;width:203px;height:24px;background:#f6f6f4"></div>
<div class="a " style="left:753px;top:311px;width:106px;height:22px;background:#fff;border:1px solid #827f82;border-top:none"></div>
<svg style="left:755px;top:313px" width="16" height="16"><rect x="5.5" y="0.5" width="10" height="9" fill="#fff" stroke="#3060b0"/><rect x="5.5" y="0.5" width="10" height="2" fill="#4080e0"/><path d="M0.5 5H5L6 6H9V11H0.5Z" fill="#f0c040"/><circle cx="8" cy="9" r="3" fill="#c8e8ff" stroke="#507090"/><path d="M10 11 L13 14" stroke="#c0a020" stroke-width="2"/></svg>
<div class="t" style="left:773px;top:313px;font-size:11px;line-height:13px;letter-spacing:-0.2px">Solution Explorer</div>
<div class="a " style="left:859px;top:311px;width:74px;height:19px;background:#f6f6f4;border:1px solid #827f82;border-top:none;border-left:none"></div>
<svg style="left:861px;top:312px" width="16" height="18"><rect x="1.5" y="1.5" width="13" height="10" fill="#fff" stroke="#6080b0"/><path d="M1 6 L5 2 L9 6 L5 10Z" fill="#f0c030" stroke="#907010" stroke-width="0.7"/><path d="M9 6 L12 3 L15 6 L12 9Z" fill="#e060d0"/><path d="M8 13 L10.5 10.5 L13 13 L10.5 15.5Z" fill="#4080e0"/></svg>
<div class="a " style="left:859px;top:311px;width:97px;height:1px;background:#827f82"></div>
<div class="t" style="left:878px;top:313px;font-size:11px;line-height:13px;letter-spacing:-0.15px">Class View</div>
<div class="a " style="left:752px;top:339px;width:204px;height:15px;background:#827f82"></div>
<div class="t" style="left:756px;top:340px;font-size:11px;line-height:13px;color:#d6d3ce;letter-spacing:-0.1px">Properties -- {EEFA5220-E29...</div>
<svg style="left:913px;top:341px" width="40" height="12"><path d="M0 4H7L3.5 7.5Z" fill="#d6d3ce"/><path d="M15.5 0.5V6.5 M19.5 0.5V6.5 M14 0.5H21 M13 7H22 M17.5 7V11" stroke="#d6d3ce" fill="none"/><path d="M29 1 L36 8 M36 1 L29 8" stroke="#d6d3ce" stroke-width="1.5"/></svg>
<div class="a " style="left:752px;top:354px;width:204px;height:353px;background:#d6d3ce;border-left:1px solid #827f82"></div>
<div class="a " style="left:753px;top:357px;width:200px;height:22px;background:#fff;border:1px solid #d6d3ce"></div>
<div class="a " style="left:941px;top:359px;width:11px;height:18px;background:#d6d3ce"></div>
<svg style="left:944px;top:366px" width="7" height="4"><path d="M0 0H7L3.5 4Z" fill="#000"/></svg>
<div class="a " style="left:753px;top:380px;width:203px;height:26px;background:linear-gradient(#fdfdfc,#f1f0ec 50%,#dddad2)"></div>
<div class="a " style="left:755px;top:382px;width:23px;height:22px;background:#b6bdd2;border:2px solid #0a246a"></div>
<svg style="left:758px;top:385px" width="18" height="16"><rect x="0.5" y="1.5" width="6" height="5" fill="#fff" stroke="#303030"/><rect x="0.5" y="9.5" width="6" height="5" fill="#fff" stroke="#303030"/><path d="M2 4H5M3.5 2.5V5.5M2 12H5M3.5 10.5V13.5" stroke="#000"/><path d="M9 2H16M9 5H16M9 10H16M9 13H16" stroke="#506070" stroke-dasharray="1 1"/></svg>
<svg style="left:780px;top:384px" width="18" height="18"><text x="0" y="8" font-size="9" font-weight="bold" fill="#2050c0" font-family="Liberation Serif">A</text><text x="0" y="17" font-size="9" font-weight="bold" fill="#c03030" font-family="Liberation Serif">Z</text><path d="M12.5 2V15 M10 12 L12.5 16 L15 12" stroke="#000" fill="none"/></svg>
<div class="a " style="left:804px;top:384px;width:1px;height:18px;background:#a6a6a6;box-shadow:1px 0 #fff"></div>
<div class="a " style="left:807px;top:382px;width:23px;height:22px;background:#b6bdd2;border:2px solid #0a246a"></div>
<svg style="left:811px;top:386px" width="16" height="14"><rect x="0.5" y="0.5" width="14" height="12" fill="#fff" stroke="#303060"/><path d="M3 3H4M6 3H12M3 6H4M6 6H12M3 9H4M6 9H12" stroke="#303060"/></svg>
<svg style="left:836px;top:385px" width="14" height="16"><path d="M6 0 L2 8 H6 L3 16 L12 6 H8 L12 0Z" fill="#f0b020" stroke="#b06010" stroke-width="0.6"/></svg>
<div class="a " style="left:856px;top:384px;width:1px;height:18px;background:#a6a6a6;box-shadow:1px 0 #fff"></div>
<svg style="left:862px;top:385px" width="16" height="16"><rect x="0.5" y="0.5" width="15" height="14" fill="#e4e4e4" stroke="#a0a0a0"/><rect x="0.5" y="0.5" width="15" height="3" fill="#c8c8c8"/><path d="M3 8H13M3 11H9" stroke="#a8a8a8"/></svg>
<div class="a " style="left:752px;top:406px;width:204px;height:1px;background:#827f82"></div>
<div class="a" style="left:753px;top:407px;width:185px;height:286px;overflow:hidden;background:#d6d3ce">
<div class="a" style="left:2px;top:4px;width:9px;height:9px;border:1px solid #000;background:#fff"></div><div class="a" style="left:4px;top:8px;width:5px;height:1px;background:#000"></div>
<div class="t" style="left:18px;top:2px;font-size:11.5px;line-height:14px;font-weight:bold;color:#827f82;letter-spacing:-0.1px">Accessibility</div>
<div class="a" style="left:14px;top:18px;width:83px;height:16px;background:#fff"></div>
<div class="a" style="left:98px;top:18px;width:87px;height:16px;background:#fff"></div>
<div class="a" style="left:14px;top:18px;width:83px;height:16px;overflow:hidden"><div class="t" style="left:3px;top:1px;font-size:11px;line-height:14px;color:#000;letter-spacing:-0.1px">AccessKey</div></div>
<div class="a" style="left:14px;top:35px;width:83px;height:16px;background:#fff"></div>
<div class="a" style="left:98px;top:35px;width:87px;height:16px;background:#fff"></div>
<div class="a" style="left:14px;top:35px;width:83px;height:16px;overflow:hidden"><div class="t" style="left:3px;top:1px;font-size:11px;line-height:14px;color:#000;letter-spacing:-0.1px">TabIndex</div></div>
<div class="t" style="left:101px;top:36px;font-size:11px;line-height:14px;letter-spacing:-0.1px;">0</div>
<div class="a" style="left:2px;top:55px;width:9px;height:9px;border:1px solid #000;background:#fff"></div><div class="a" style="left:4px;top:59px;width:5px;height:1px;background:#000"></div>
<div class="t" style="left:18px;top:53px;font-size:11.5px;line-height:14px;font-weight:bold;color:#827f82;letter-spacing:-0.1px">Appearance</div>
<div class="a" style="left:14px;top:69px;width:83px;height:16px;background:#fff"></div>
<div class="a" style="left:98px;top:69px;width:87px;height:16px;background:#fff"></div>
<div class="a" style="left:14px;top:69px;width:83px;height:16px;overflow:hidden"><div class="t" style="left:3px;top:1px;font-size:11px;line-height:14px;color:#000;letter-spacing:-0.1px">BackColor</div></div>
<div class="t" style="left:101px;top:70px;font-size:11px;line-height:14px;letter-spacing:0.7px;font-weight:bold">Aqua</div>
<div class="a" style="left:14px;top:86px;width:83px;height:16px;background:#fff"></div>
<div class="a" style="left:98px;top:86px;width:87px;height:16px;background:#fff"></div>
<div class="a" style="left:14px;top:86px;width:83px;height:16px;overflow:hidden"><div class="t" style="left:3px;top:1px;font-size:11px;line-height:14px;color:#000;letter-spacing:-0.1px">BorderColor</div></div>
<div class="a" style="left:14px;top:103px;width:83px;height:16px;background:#fff"></div>
<div class="a" style="left:98px;top:103px;width:87px;height:16px;background:#fff"></div>
<div class="a" style="left:14px;top:103px;width:83px;height:16px;overflow:hidden"><div class="t" style="left:3px;top:1px;font-size:11px;line-height:14px;color:#000;letter-spacing:-0.1px">BorderStyle</div></div>
<div class="t" style="left:101px;top:104px;font-size:11px;line-height:14px;letter-spacing:-0.1px;">NotSet</div>
<div class="a" style="left:14px;top:120px;width:83px;height:16px;background:#fff"></div>
<div class="a" style="left:98px;top:120px;width:87px;height:16px;background:#fff"></div>
<div class="a" style="left:14px;top:120px;width:83px;height:16px;overflow:hidden"><div class="t" style="left:3px;top:1px;font-size:11px;line-height:14px;color:#000;letter-spacing:-0.1px">BorderWidth</div></div>
<div class="a" style="left:14px;top:137px;width:83px;height:16px;background:#0a246a"></div>
<div class="a" style="left:98px;top:137px;width:87px;height:16px;background:#fff"></div>
<div class="a" style="left:14px;top:137px;width:83px;height:16px;overflow:hidden"><div class="t" style="left:3px;top:1px;font-size:11px;line-height:14px;color:#fff;letter-spacing:-0.1px">CssClass</div></div>
<div class="a" style="left:14px;top:154px;width:83px;height:16px;background:#fff"></div>
<div class="a" style="left:98px;top:154px;width:87px;height:16px;background:#fff"></div>
<div class="a" style="left:14px;top:154px;width:83px;height:16px;overflow:hidden"><div class="t" style="left:3px;top:1px;font-size:11px;line-height:14px;color:#000;letter-spacing:-0.1px">Font</div></div>
<div class="a" style="left:2px;top:157px;width:9px;height:9px;border:1px solid #000;background:#fff"></div><div class="a" style="left:4px;top:161px;width:5px;height:1px;background:#000"></div><div class="a" style="left:6px;top:159px;width:1px;height:5px;background:#000"></div>
<div class="a" style="left:14px;top:171px;width:83px;height:16px;background:#fff"></div>
<div class="a" style="left:98px;top:171px;width:87px;height:16px;background:#fff"></div>
<div class="a" style="left:14px;top:171px;width:83px;height:16px;overflow:hidden"><div class="t" style="left:3px;top:1px;font-size:11px;line-height:14px;color:#000;letter-spacing:-0.1px">ForeColor</div></div>
<div class="a" style="left:14px;top:188px;width:83px;height:16px;background:#fff"></div>
<div class="a" style="left:98px;top:188px;width:87px;height:16px;background:#fff"></div>
<div class="a" style="left:14px;top:188px;width:83px;height:16px;overflow:hidden"><div class="t" style="left:3px;top:1px;font-size:11px;line-height:14px;color:#000;letter-spacing:-0.1px">Text</div></div>
<div class="t" style="left:101px;top:189px;font-size:11px;line-height:14px;letter-spacing:0.7px;font-weight:bold">Button</div>
<div class="a" style="left:2px;top:208px;width:9px;height:9px;border:1px solid #000;background:#fff"></div><div class="a" style="left:4px;top:212px;width:5px;height:1px;background:#000"></div>
<div class="t" style="left:18px;top:206px;font-size:11.5px;line-height:14px;font-weight:bold;color:#827f82;letter-spacing:-0.1px">Behavior</div>
<div class="a" style="left:14px;top:222px;width:83px;height:16px;background:#fff"></div>
<div class="a" style="left:98px;top:222px;width:87px;height:16px;background:#fff"></div>
<div class="a" style="left:14px;top:222px;width:83px;height:16px;overflow:hidden"><div class="t" style="left:3px;top:1px;font-size:11px;line-height:14px;color:#000;letter-spacing:-0.1px">CausesValidation</div></div>
<div class="t" style="left:101px;top:223px;font-size:11px;line-height:14px;letter-spacing:-0.1px;">True</div>
<div class="a" style="left:14px;top:239px;width:83px;height:16px;background:#fff"></div>
<div class="a" style="left:98px;top:239px;width:87px;height:16px;background:#fff"></div>
<div class="a" style="left:14px;top:239px;width:83px;height:16px;overflow:hidden"><div class="t" style="left:3px;top:1px;font-size:11px;line-height:14px;color:#000;letter-spacing:-0.1px">CommandArgument</div></div>
<div class="a" style="left:14px;top:256px;width:83px;height:16px;background:#fff"></div>
<div class="a" style="left:98px;top:256px;width:87px;height:16px;background:#fff"></div>
<div class="a" style="left:14px;top:256px;width:83px;height:16px;overflow:hidden"><div class="t" style="left:3px;top:1px;font-size:11px;line-height:14px;color:#000;letter-spacing:-0.1px">CommandName</div></div>
<div class="a" style="left:14px;top:273px;width:83px;height:16px;background:#fff"></div>
<div class="a" style="left:98px;top:273px;width:87px;height:16px;background:#fff"></div>
<div class="a" style="left:14px;top:273px;width:83px;height:16px;overflow:hidden"><div class="t" style="left:3px;top:1px;font-size:11px;line-height:14px;color:#000;letter-spacing:-0.1px">Enabled</div></div>
<div class="t" style="left:101px;top:274px;font-size:11px;line-height:14px;letter-spacing:-0.1px;">True</div>
</div>
<div class="b3" style="left:924px;top:546px;width:14px;height:13px"></div>
<svg style="left:928px;top:551px" width="5" height="3"><path d="M0 0H5L2.5 3Z" fill="#000"/></svg>
<div class="a hatch" style="left:938px;top:407px;width:17px;height:286px;"></div>
<div class="b3" style="left:939px;top:407px;width:16px;height:16px"></div>
<svg style="left:943px;top:413px" width="7" height="4"><path d="M0 4H7L3.5 0Z" fill="#000"/></svg>
<div class="b3" style="left:939px;top:423px;width:16px;height:138px"></div>
<div class="b3" style="left:939px;top:677px;width:16px;height:16px"></div>
<svg style="left:943px;top:683px" width="7" height="4"><path d="M0 0H7L3.5 4Z" fill="#000"/></svg>
<div class="a " style="left:849px;top:561px;width:90px;height:41px;background:#fff;border:1px solid #000"></div>
<div class="t" style="left:852px;top:564px;font-size:11px;line-height:13px;letter-spacing:-0.1px">blue_color</div>
<div class="t" style="left:852px;top:580px;font-size:11px;line-height:13px;letter-spacing:-0.1px">red_color</div>
<div class="a " style="left:752px;top:692px;width:204px;height:2px;background:#d6d3ce;border-top:1px solid #827f82"></div>
<div class="a " style="left:752px;top:696px;width:204px;height:59px;background:#d6d3ce;border-top:1px solid #827f82;border-bottom:1px solid #827f82;border-right:1px solid #827f82;border-left:1px solid #827f82"></div>
<div class="t" style="left:757px;top:700px;font-size:11.5px;line-height:13px;font-weight:bold;letter-spacing:-0.1px">CssClass</div>
<div class="t" style="left:757px;top:716px;font-size:11px;line-height:13px;letter-spacing:-0.2px">CSS Class name applied to the control.</div>
<div class="t" style="left:12px;top:760px;font-size:11px;line-height:13px;letter-spacing:-0.1px">Ready</div>
<svg style="left:944px;top:762px" width="12" height="12"><path d="M11 0 L0 11 M11 4 L4 11 M11 8 L8 11" stroke="#827f82" stroke-width="1.2"/><path d="M11.8 1 L1 11.8 M11.8 5 L5 11.8 M11.8 9 L9 11.8" stroke="#fff" stroke-width="0.8"/></svg>
</div></body></html>
